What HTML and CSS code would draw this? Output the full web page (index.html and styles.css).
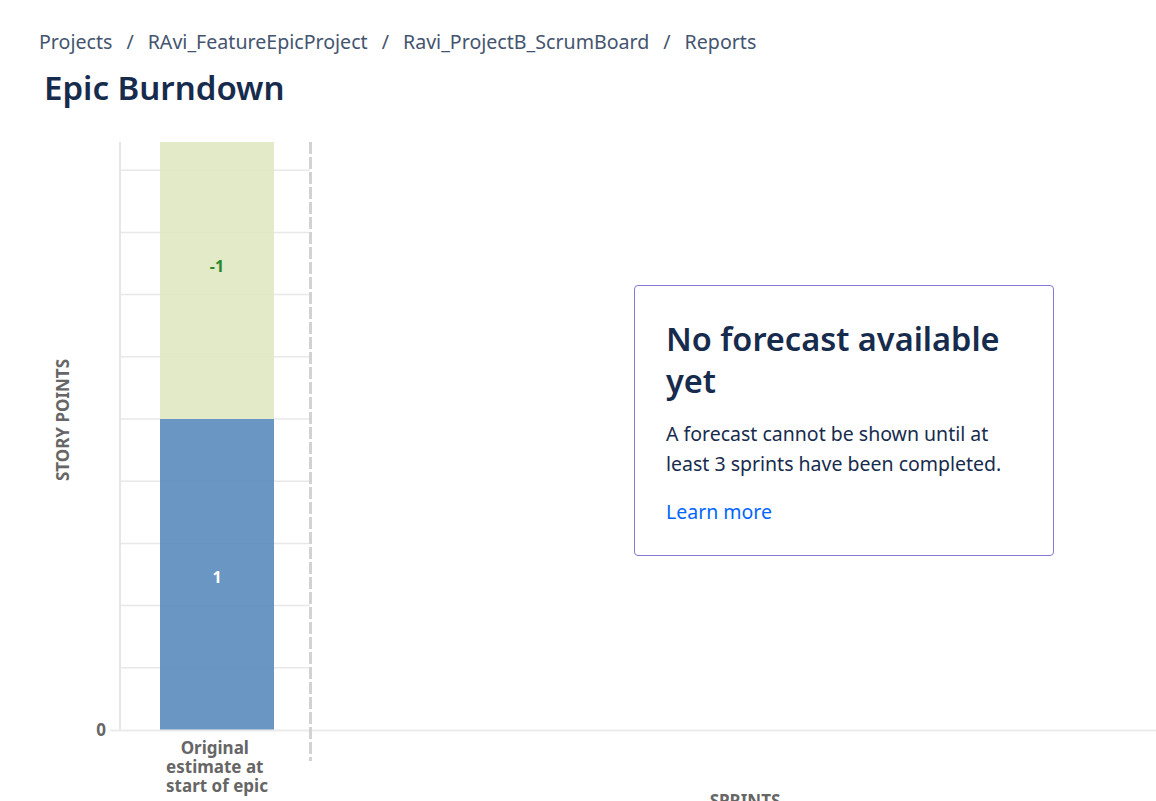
FILE: index.html
```html
<!DOCTYPE html>
<html>
<head>
<meta charset="utf-8">
<link rel="stylesheet" href="styles.css">
</head>
<body>
<header class="page-header">
  <nav class="breadcrumbs">
    <span class="crumb">Projects</span><span class="sep">/</span>
    <span class="crumb">RAvi_FeatureEpicProject</span><span class="sep">/</span>
    <span class="crumb">Ravi_ProjectB_ScrumBoard</span><span class="sep">/</span>
    <span class="crumb">Reports</span>
  </nav>
  <h1 class="title">Epic Burndown</h1>
</header>
<section class="chart">
  <svg class="chart-svg" width="1156" height="671" viewBox="0 130 1156 671" xmlns="http://www.w3.org/2000/svg">
    <g stroke="#e8e8e8" stroke-width="1.5">
      <line x1="120" y1="170.2" x2="310" y2="170.2"/>
      <line x1="120" y1="232.4" x2="310" y2="232.4"/>
      <line x1="120" y1="294.6" x2="310" y2="294.6"/>
      <line x1="120" y1="356.8" x2="310" y2="356.8"/>
      <line x1="120" y1="419" x2="310" y2="419"/>
      <line x1="120" y1="481.2" x2="310" y2="481.2"/>
      <line x1="120" y1="543.4" x2="310" y2="543.4"/>
      <line x1="120" y1="605.6" x2="310" y2="605.6"/>
      <line x1="120" y1="667.8" x2="310" y2="667.8"/>
    </g>
    <line x1="120" y1="142" x2="120" y2="731" stroke="#e6e6e6" stroke-width="2"/>
    <rect x="160" y="142" width="114" height="277" fill="#dfe8c2" fill-opacity="0.9"/>
    <rect x="160" y="419" width="114" height="311" fill="#5a8bbd" fill-opacity="0.9"/>
    <line x1="110" y1="730.5" x2="1156" y2="730.5" stroke="#ebebeb" stroke-width="2"/>
    <line x1="310.5" y1="142" x2="310.5" y2="761" stroke="#d2d2d2" stroke-width="3" stroke-dasharray="12 3"/>
    <text class="bar-label neg" x="217" y="272" text-anchor="middle">-1</text>
    <text class="bar-label pos" x="217" y="583" text-anchor="middle">1</text>
    <text class="axis-tick" x="106" y="736" text-anchor="end">0</text>
    <text class="axis-title" transform="translate(69 420) rotate(-90)" text-anchor="middle">STORY POINTS</text>
    <text class="x-label" text-anchor="middle">
      <tspan x="217" y="754">Original</tspan>
      <tspan x="217" y="773">estimate at</tspan>
      <tspan x="217" y="792">start of epic</tspan>
    </text>
    <text class="axis-title" x="745" y="807" text-anchor="middle">SPRINTS</text>
  </svg>
  <div class="forecast-card">
    <h2 class="forecast-title">No forecast available yet</h2>
    <p class="forecast-text">A forecast cannot be shown until at least 3 sprints have been completed.</p>
    <a class="forecast-link" href="#">Learn more</a>
  </div>
</section>
</body>
</html>
```
FILE: styles.css
```css
html, body {
  margin: 0;
  padding: 0;
  overflow: hidden;
  background: #ffffff;
}
body {
  font-family: "Noto Sans", "Open Sans", sans-serif;
  color: #172b4d;
}
.page-header {
  padding: 28px 0 0 0;
  height: 130px;
  box-sizing: border-box;
}
.breadcrumbs {
  display: flex;
  align-items: center;
  padding-left: 39px;
  font-size: 19.6px;
  line-height: 28px;
  color: #44546f;
  white-space: nowrap;
}
.sep {
  padding: 0 14px;
}
.title {
  margin: 12px 0 0 44px;
  font-size: 33px;
  line-height: 40px;
  font-weight: 600;
  color: #172b4d;
}
.chart {
  position: relative;
  height: 671px;
}
.chart-svg {
  display: block;
  overflow: hidden;
}
.bar-label {
  font-family: "Noto Sans", sans-serif;
  font-size: 16px;
  font-weight: 700;
}
.bar-label.neg { fill: #2a8a2a; }
.bar-label.pos { fill: #ffffff; }
.axis-tick, .axis-title, .x-label {
  font-family: "Noto Sans", sans-serif;
  font-weight: 700;
  fill: #666666;
}
.axis-tick { font-size: 17px; }
.axis-title { font-size: 17px; }
.x-label { font-size: 17px; }
.forecast-card {
  position: absolute;
  left: 634px;
  top: 155px;
  width: 420px;
  height: 271px;
  box-sizing: border-box;
  border: 1px solid #8777d9;
  border-radius: 4px;
  padding: 32px 31px 28px 31px;
  background: #ffffff;
}
.forecast-title {
  margin: 0;
  font-size: 32.5px;
  line-height: 42px;
  font-weight: 600;
  color: #172b4d;
}
.forecast-text {
  margin: 17px 0 18px 0;
  font-size: 19.5px;
  line-height: 30px;
  color: #172b4d;
}
.forecast-link {
  display: block;
  font-size: 19.5px;
  line-height: 30px;
  color: #0065ff;
  text-decoration: none;
}
```
